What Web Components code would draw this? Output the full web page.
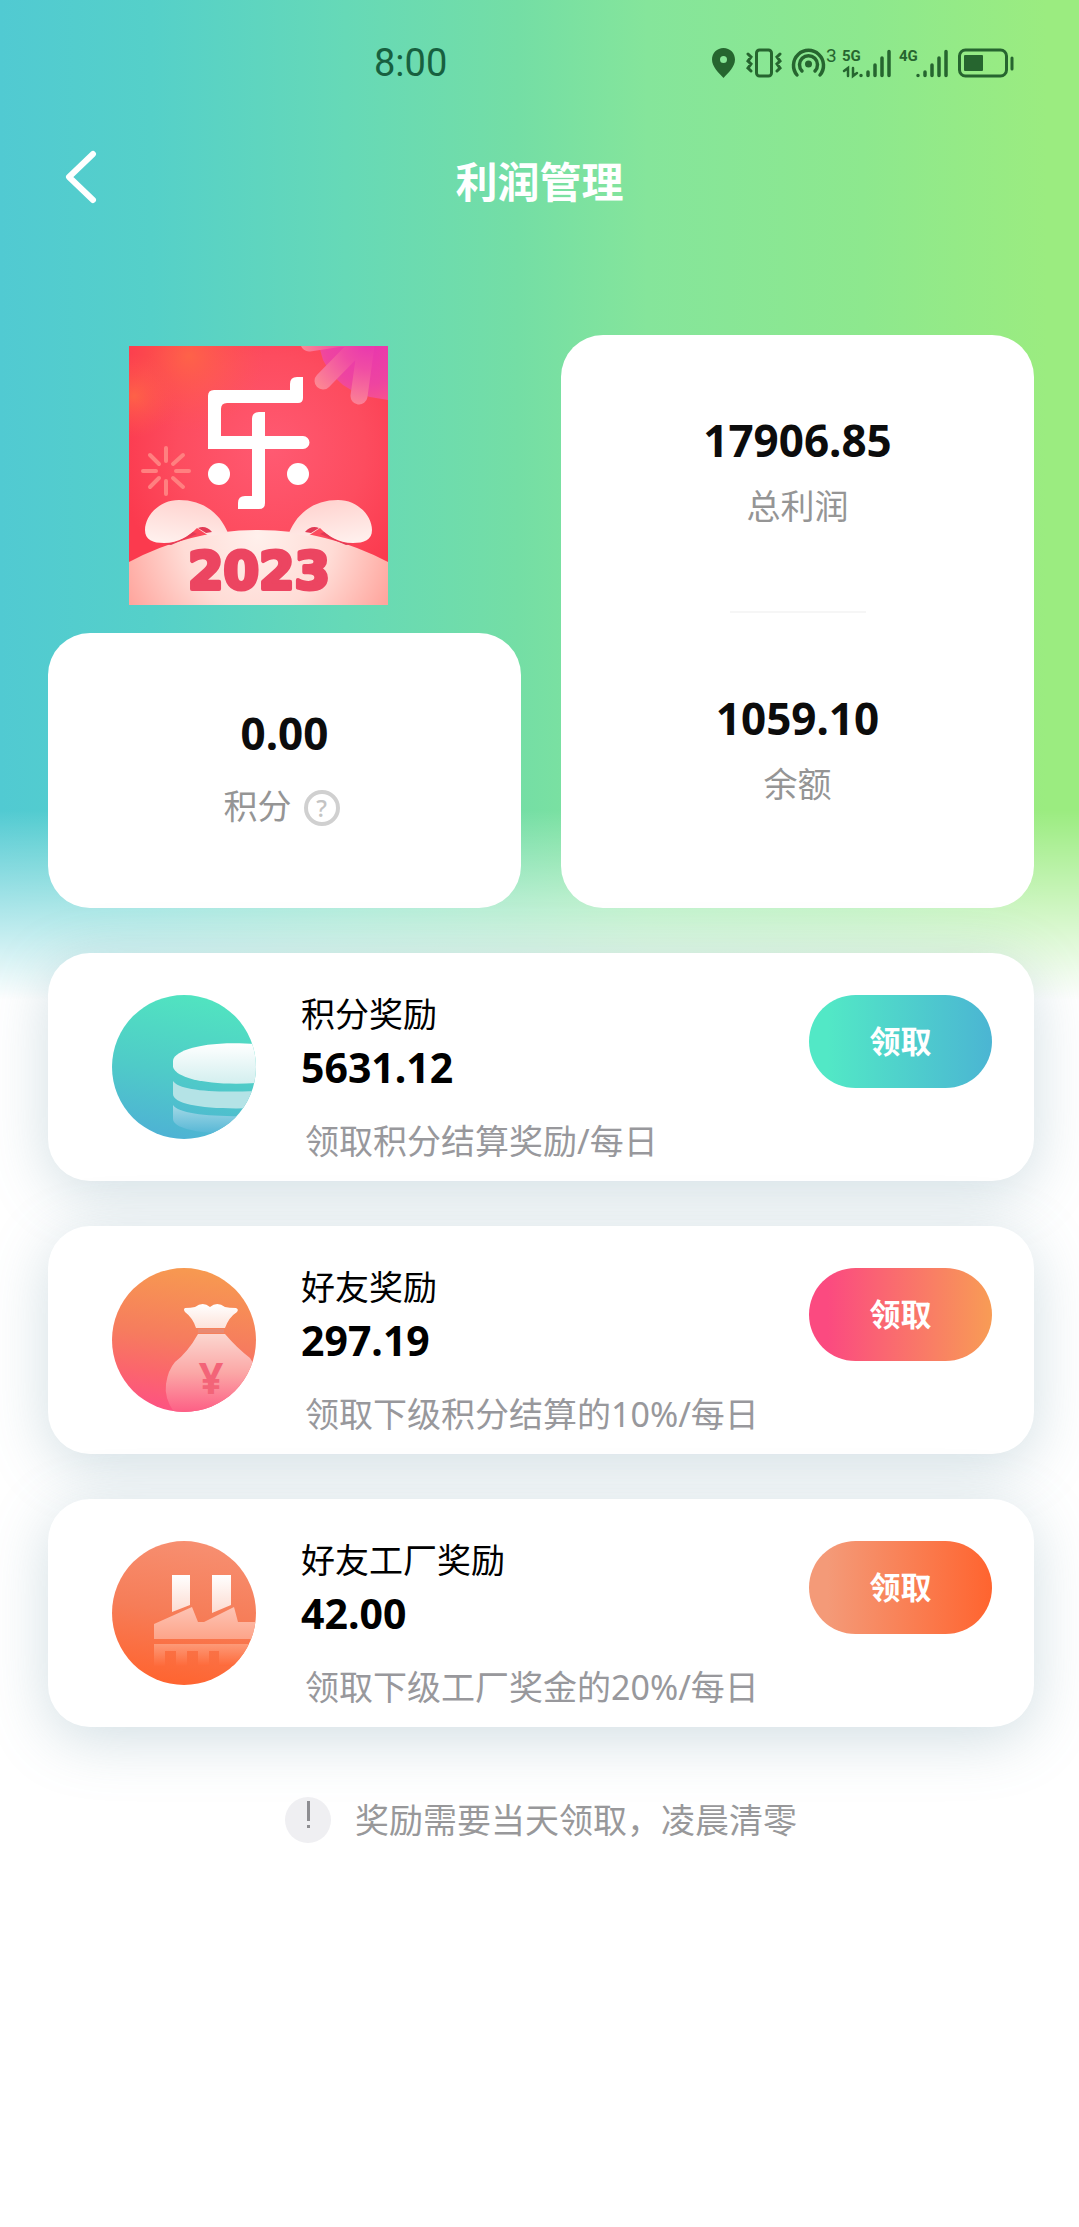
<!DOCTYPE html>
<html lang="zh-CN">
<head>
<meta charset="utf-8">
<meta name="viewport" content="width=device-width, initial-scale=1">
<title>利润管理</title>
<style>
    body {
        margin: 0;
        background: #fff;
        color: #0c0c0c;
        font-family: "Noto Sans", "Noto Sans CJK SC", sans-serif;
    }
</style>
</head>
<body>
<profit-page>
    <status-bar slot="top">8:00</status-bar>
    <page-nav slot="top">利润管理</page-nav>

    <app-logo slot="logo"></app-logo>
    <stat-card slot="points">
        <stat-value value="0.00" style="--gap: 20px">积分 <help-button></help-button></stat-value>
    </stat-card>
    <stat-card slot="totals" style="--top: 75px">
        <stat-value value="17906.85">总利润</stat-value>
        <hr>
        <stat-value value="1059.10">余额</stat-value>
    </stat-card>

    <reward-card name="积分奖励" amount="5631.12" from="#52e8c6" to="#4bb5d3">
        <coins-icon slot="icon"></coins-icon>
        领取积分结算奖励/每日
    </reward-card>
    <reward-card name="好友奖励" amount="297.19" from="#fb4a80" to="#f89c55">
        <bag-icon slot="icon"></bag-icon>
        领取下级积分结算的10%/每日
    </reward-card>
    <reward-card name="好友工厂奖励" amount="42.00" from="#f49a78" to="#ff642f">
        <factory-icon slot="icon"></factory-icon>
        领取下级工厂奖金的20%/每日
    </reward-card>

    <page-note slot="note">奖励需要当天领取，凌晨清零</page-note>
</profit-page>

<script>
// small helper: every element is just a template in an open shadow root
function define(name, render) {
    customElements.define(name, class extends HTMLElement {
        connectedCallback() {
            if (this.shadowRoot) return;
            this.attachShadow({ mode: 'open' });
            this.shadowRoot.innerHTML = render(this);
        }
    });
}

define('profit-page', () => `
    <style>
        :host {
            display: block;
            min-height: 100vh;
            background:
                linear-gradient(180deg, rgba(255, 255, 255, 0) 81%, #fff 100%) 0 0 / 100% 1000px no-repeat,
                linear-gradient(90deg, #51cad2 0%, #55d0c9 14%, #66d9b7 32%, #74dea5 48%, #85e59b 60%, #8de88e 80%, #9bec80 97%) 0 0 / 100% 1000px no-repeat;
        }
        main {
            padding: 97px 45px 60px 48px;
        }
        .stats {
            display: grid;
            grid-template-columns: 1fr 1fr;
            gap: 40px;
            margin-bottom: 45px;
        }
        .left {
            display: flex;
            flex-direction: column;
            gap: 28px;
            padding-top: 11px;
        }
        .left slot[name="points"] {
            display: block;
            flex: 1;
        }
        .list {
            display: flex;
            flex-direction: column;
            gap: 45px;
            margin-bottom: 70px;
        }
    </style>
    <header><slot name="top"></slot></header>
    <main>
        <section class="stats">
            <div class="left">
                <slot name="logo"></slot>
                <slot name="points"></slot>
            </div>
            <slot name="totals"></slot>
        </section>
        <section class="list"><slot></slot></section>
        <slot name="note"></slot>
    </main>
`);

define('status-bar', () => `
    <style>
        :host {
            display: flex;
            justify-content: space-between;
            align-items: center;
            height: 126px;
            padding: 0 65px 0 374px;
            color: #17603f;
            font: 38px/1 Roboto, sans-serif;
        }
        svg {
            display: block;
            color: #26652f;
        }
        text {
            font-family: Roboto, sans-serif;
            fill: currentColor;
        }
    </style>
    <time><slot></slot></time>
    <svg width="302" height="46" viewBox="0 -8 302 46" fill="none" stroke="currentColor" stroke-width="3" stroke-linecap="round" aria-hidden="true">
        <path fill="currentColor" stroke="none" fill-rule="evenodd" d="M11.500 0C5 0 0 5 0 11.500C0 19 7 25 11.500 30C16 25 23 19 23 11.500C23 5 18 0 11.500 0ZM11.500 8a3.500 3.500 0 1 1 0 7a3.500 3.500 0 1 1 0-7Z"/>
        <rect x="44.500" y="2" width="15" height="26" rx="3"/>
        <path d="M36 6l3 3-3 4 3 3-3 4 3 3M68 6l-3 3 3 4-3 3 3 4-3 3"/>
        <circle cx="96.500" cy="16" r="3.500" fill="currentColor" stroke="none"/>
        <path stroke-width="3.500" d="M85 27a15 15 0 1 1 23 0M90 23a9 9 0 1 1 13 0"/>
        <g stroke="none">
            <text x="114" y="14" font-size="19">3</text>
            <text x="130" y="13" font-size="15" font-weight="700">5G</text>
            <text x="187" y="13" font-size="15" font-weight="700">4G</text>
        </g>
        <path stroke-width="2.500" d="M132 23l4-3v8M141 20v8l4-3"/>
        <path stroke-width="3.500" d="M149 27.500v0M156 24v3.500M163 17v10.500M170 10v17.500M177 3.500v24M206 27.500v0M213 24v3.500M220 17v10.500M227 10v17.500M234 3.500v24"/>
        <rect x="247.500" y="2" width="47" height="26" rx="6"/>
        <rect x="252" y="7" width="19" height="16" rx="1" fill="currentColor" stroke="none"/>
        <path d="M300 10v11"/>
    </svg>
`);

define('page-nav', () => `
    <style>
        :host {
            display: grid;
            grid-template-columns: 1fr auto 1fr;
            align-items: center;
            height: 112px;
            padding: 0 54px;
            color: #fff;
        }
        button {
            width: 56px;
            height: 76px;
            margin-bottom: 8px;
            padding: 10px;
            border: 0;
            background: none;
            color: inherit;
        }
        svg {
            display: block;
        }
        h1 {
            margin: 0;
            font-size: 42px;
            line-height: 60px;
            font-weight: 700;
        }
    </style>
    <button type="button" aria-label="返回">
        <svg width="36" height="56" viewBox="0 0 36 56" fill="none" stroke="currentColor" stroke-width="6" stroke-linecap="round" stroke-linejoin="round">
            <path d="M29 4L5 27l24 23"/>
        </svg>
    </button>
    <h1><slot></slot></h1>
`);

define('app-logo', () => `
    <style>
        :host {
            display: block;
            margin-left: 81px;
        }
        svg {
            display: block;
        }
        text {
            font-family: "DejaVu Sans", sans-serif;
            font-weight: 700;
        }
    </style>
    <svg width="259" height="259" viewBox="0 0 259 259" role="img" aria-label="2023">
        <defs>
            <radialGradient id="bg" cx=".55" cy=".4" r=".6">
                <stop offset="0" stop-color="#ff5a72"/>
                <stop offset=".6" stop-color="#fd4c5f"/>
                <stop offset="1" stop-color="#fb3a4e"/>
            </radialGradient>
            <radialGradient id="glow">
                <stop offset="0" stop-color="#ff6a45" stop-opacity=".8"/>
                <stop offset="1" stop-color="#ff5a50" stop-opacity="0"/>
            </radialGradient>
            <radialGradient id="flower" gradientUnits="userSpaceOnUse" cx="240" cy="-5" r="72">
                <stop offset="0" stop-color="#e835b0"/>
                <stop offset=".6" stop-color="#ee44a0"/>
                <stop offset="1" stop-color="#fb5a86"/>
            </radialGradient>
            <radialGradient id="petal" gradientUnits="userSpaceOnUse" cx="240" cy="-5" r="70">
                <stop offset="0" stop-color="#e835b0"/>
                <stop offset=".4" stop-color="#f04ca4"/>
                <stop offset="1" stop-color="#fd8a92"/>
            </radialGradient>
            <radialGradient id="hill" gradientUnits="userSpaceOnUse" cx="129" cy="190" r="150">
                <stop offset="0" stop-color="#fff0ec"/>
                <stop offset=".5" stop-color="#ffdcd6"/>
                <stop offset="1" stop-color="#ffa199"/>
            </radialGradient>
            <linearGradient id="ear" x1=".6" y1="0" x2=".3" y2="1">
                <stop offset="0" stop-color="#ffd3cf"/>
                <stop offset="1" stop-color="#fff0ed"/>
            </linearGradient>
        </defs>
        <rect width="259" height="259" fill="url(#bg)"/>
        <circle cx="60" cy="10" r="75" fill="url(#glow)"/>
        <circle cx="5" cy="50" r="42" fill="url(#glow)"/>
        <path fill="url(#flower)" d="M190 0h69v54l-18-3-14-4-13-8-12-11-8-14z"/>
        <g stroke="url(#petal)" stroke-width="17" stroke-linecap="round">
            <path d="M236-8L194 35M238-8L230 50M240-12L180-3"/>
        </g>
        <g stroke="#ff8080" stroke-width="4" stroke-linecap="round">
            <path d="M37 115v-13M37 135v13M27 125H14M47 125h13M30 118l-9-9M44 118l10-9M30 132l-9 9M44 132l10 9"/>
        </g>
        <path fill="#fff" d="M161 38q0-7 7-7h6v21q0 5-5 5H98q-6 0-6 6v27h31V73q0-7 7-7h6v24h38a6.500 6.500 0 0 1 0 13h-38v54q0 6-6 6h-21v-6q0-7 7-7h7v-47H79V50q0-6 6-6h76z"/>
        <circle cx="90" cy="128" r="11" fill="#fff"/>
        <circle cx="169" cy="128" r="11" fill="#fff"/>
        <path fill="url(#hill)" d="M0 216Q60 184 129 184Q198 184 259 216V259H0Z"/>
        <g>
            <path fill="url(#ear)" d="M99 187C90 165 72 154 50 154C30 154 16 170 16 184C16 194 24 197 35 197C50 197 60 190 68 182L80 190Z"/>
            <path fill="#e23a55" d="M64 186l4 2-26 11-6-1q15-1 28-12zM69 182q8-3 14 4l-6 1z"/>
        </g>
        <g transform="translate(259 0) scale(-1 1)">
            <path fill="url(#ear)" d="M99 187C90 165 72 154 50 154C30 154 16 170 16 184C16 194 24 197 35 197C50 197 60 190 68 182L80 190Z"/>
            <path fill="#e23a55" d="M64 186l4 2-26 11-6-1q15-1 28-12zM69 182q8-3 14 4l-6 1z"/>
        </g>
        <text x="130" y="243" font-size="51" text-anchor="middle" fill="#ec4561" stroke="#ec4561" stroke-width="4" stroke-linejoin="round">2023</text>
    </svg>
`);

define('stat-card', () => `
    <style>
        :host {
            display: block;
            box-sizing: border-box;
            height: 100%;
            padding: var(--top, 70px) 20px 79px;
            border-radius: 42px;
            background: #fff;
        }
        ::slotted(hr) {
            width: 136px;
            height: 2px;
            margin: 82px auto 75px;
            border: 0;
            background: #f6f6f6;
        }
    </style>
    <slot></slot>
`);

define('stat-value', el => `
    <style>
        :host {
            display: flex;
            flex-direction: column;
            align-items: center;
            gap: var(--gap, 13px);
        }
        strong {
            font-size: 44px;
            line-height: 60px;
        }
        span {
            display: flex;
            align-items: center;
            gap: 12px;
            color: #959595;
            font-size: 34px;
            line-height: 46px;
        }
    </style>
    <strong>${el.getAttribute('value')}</strong>
    <span><slot></slot></span>
`);

define('help-button', () => `
    <style>
        :host {
            display: block;
            padding: 4px 6px 0 0;
        }
        button {
            display: block;
            box-sizing: border-box;
            width: 36px;
            height: 36px;
            padding: 0;
            border: 4px solid #d0d0d0;
            border-radius: 50%;
            background: none;
            color: #c4c4c4;
            font: 500 24px/28px "Noto Sans", sans-serif;
        }
    </style>
    <button type="button">?</button>
`);

define('reward-card', el => `
    <style>
        :host {
            display: flex;
            align-items: flex-start;
            box-sizing: border-box;
            min-height: 228px;
            padding: 36px 42px 17px 64px;
            border-radius: 42px;
            background: #fff;
            box-shadow: 0 12px 60px rgba(90, 135, 155, 0.28);
        }
        slot[name="icon"] {
            display: block;
            margin: 6px 45px 0 0;
        }
        .copy {
            flex: 1;
        }
        h2, p {
            margin: 0;
            font-size: 34px;
            font-weight: 400;
        }
        h2 {
            line-height: 50px;
            color: #000;
        }
        strong {
            display: block;
            margin-bottom: 23px;
            font-size: 41px;
            line-height: 56px;
            color: #000;
        }
        p {
            padding-left: 4px;
            line-height: 46px;
            color: #98989c;
            white-space: nowrap;
        }
        button {
            width: 183px;
            height: 93px;
            margin-top: 6px;
            padding: 0 0 4px;
            border: 0;
            border-radius: 47px;
            background: linear-gradient(90deg, ${el.getAttribute('from')} 10%, ${el.getAttribute('to')});
            color: #fff;
            font: 700 31px/44px "Noto Sans CJK SC", sans-serif;
        }
    </style>
    <slot name="icon"></slot>
    <div class="copy">
        <h2>${el.getAttribute('name')}</h2>
        <strong>${el.getAttribute('amount')}</strong>
        <p><slot></slot></p>
    </div>
    <button type="button">领取</button>
`);

const iconStyle = `
    <style>
        :host {
            display: block;
            width: 144px;
            height: 144px;
            border-radius: 50%;
            overflow: hidden;
        }
        svg {
            display: block;
        }
    </style>
`;

define('coins-icon', () => `
    ${iconStyle}
    <svg width="144" height="144" viewBox="0 0 144 144" aria-hidden="true">
        <defs>
            <linearGradient id="bg" x1=".6" y1="0" x2=".4" y2="1">
                <stop offset="0" stop-color="#51e4c0"/>
                <stop offset=".55" stop-color="#4fcbc8"/>
                <stop offset="1" stop-color="#4eb2d4"/>
            </linearGradient>
            <linearGradient id="coin" x2="0" y2="1">
                <stop offset="0" stop-color="#fff"/>
                <stop offset="1" stop-color="#d3efef"/>
            </linearGradient>
            <linearGradient id="low" x2="0" y2="1">
                <stop offset="0" stop-color="#a4d9e6"/>
                <stop offset="1" stop-color="#52b5d5"/>
            </linearGradient>
        </defs>
        <rect width="144" height="144" fill="url(#bg)"/>
        <path fill="url(#coin)" d="M144 49C90 45 61 56 61 66V72C64 84 100 91 144 88Z"/>
        <path fill="#b4e3e6" d="M61 86C67 95 98 98 144 96V113C96 115 61 110 61 99Z"/>
        <path fill="url(#low)" d="M61 110C67 119 98 122 144 121V140C96 140 61 135 61 124Z"/>
    </svg>
`);

define('bag-icon', () => `
    ${iconStyle}
    <svg width="144" height="144" viewBox="0 0 144 144" aria-hidden="true">
        <defs>
            <linearGradient id="bg" x1=".6" y1="0" x2=".45" y2="1">
                <stop offset="0" stop-color="#f79a50"/>
                <stop offset=".5" stop-color="#f67c5e"/>
                <stop offset=".75" stop-color="#fb666c"/>
                <stop offset="1" stop-color="#fd5282"/>
            </linearGradient>
            <linearGradient id="bag" gradientUnits="userSpaceOnUse" x1="0" y1="66" x2="0" y2="144">
                <stop offset="0" stop-color="#fbd6cf"/>
                <stop offset=".5" stop-color="#fba7a6"/>
                <stop offset="1" stop-color="#fd5f85"/>
            </linearGradient>
            <linearGradient id="neck" x2="0" y2="1">
                <stop offset="0" stop-color="#fff"/>
                <stop offset="1" stop-color="#fde3da"/>
            </linearGradient>
        </defs>
        <rect width="144" height="144" fill="url(#bg)"/>
        <path fill="url(#neck)" d="M73 40q6 0 10-1q8-6 15 0q7-6 15 0q4 1 11 1q3 1 1 4q-8 5-12 16H84q-3-10-11-16q-2-3 0-4z"/>
        <path fill="#e98a72" d="M86 61h26v4H86z"/>
        <path fill="url(#bag)" d="M86 66h27q12 14 25 24l6 10v44H62Q52 130 54 116Q56 102 63 94Q76 84 86 66z"/>
        <text x="99" y="126" font-family="Noto Sans, sans-serif" font-size="43" font-weight="700" text-anchor="middle" fill="#f36478">¥</text>
    </svg>
`);

define('factory-icon', () => `
    ${iconStyle}
    <svg width="144" height="144" viewBox="0 0 144 144" aria-hidden="true">
        <defs>
            <linearGradient id="bg" x1=".6" y1="0" x2=".45" y2="1">
                <stop offset="0" stop-color="#f78f71"/>
                <stop offset=".5" stop-color="#f67d58"/>
                <stop offset="1" stop-color="#ff6430"/>
            </linearGradient>
            <linearGradient id="chimney" x2="0" y2="1">
                <stop offset="0" stop-color="#fff"/>
                <stop offset="1" stop-color="#fddbd0"/>
            </linearGradient>
            <linearGradient id="roof" x2="0" y2="1">
                <stop offset="0" stop-color="#fdc4b5"/>
                <stop offset="1" stop-color="#fda489"/>
            </linearGradient>
            <linearGradient id="base" x2="0" y2="1">
                <stop offset="0" stop-color="#fd9a78"/>
                <stop offset="1" stop-color="#fe6a3a"/>
            </linearGradient>
        </defs>
        <rect width="144" height="144" fill="url(#bg)"/>
        <path fill="url(#chimney)" d="M60 34h18v30L60 71zM100 34h19v30l-19 8z"/>
        <path fill="url(#roof)" d="M42 83L80 66L86 81H92L122 66L126 81H144V98H42z"/>
        <path fill="url(#base)" d="M42 103h102v22h-37v-15h-10v15H86v-15H75v15H64v-15H53v15H42z"/>
    </svg>
`);

define('page-note', () => `
    <style>
        :host {
            display: flex;
            justify-content: center;
            align-items: center;
            gap: 24px;
            color: #98989a;
            font-size: 34px;
            line-height: 46px;
        }
        svg {
            display: block;
        }
    </style>
    <svg width="46" height="46" viewBox="0 0 46 46" aria-hidden="true">
        <circle cx="23" cy="23" r="23" fill="#efeff2"/>
        <path fill="#8e8e92" d="M22 4h3v20h-3zM22 28h3v3h-3z"/>
    </svg>
    <span><slot></slot></span>
`);
</script>
</body>
</html>
